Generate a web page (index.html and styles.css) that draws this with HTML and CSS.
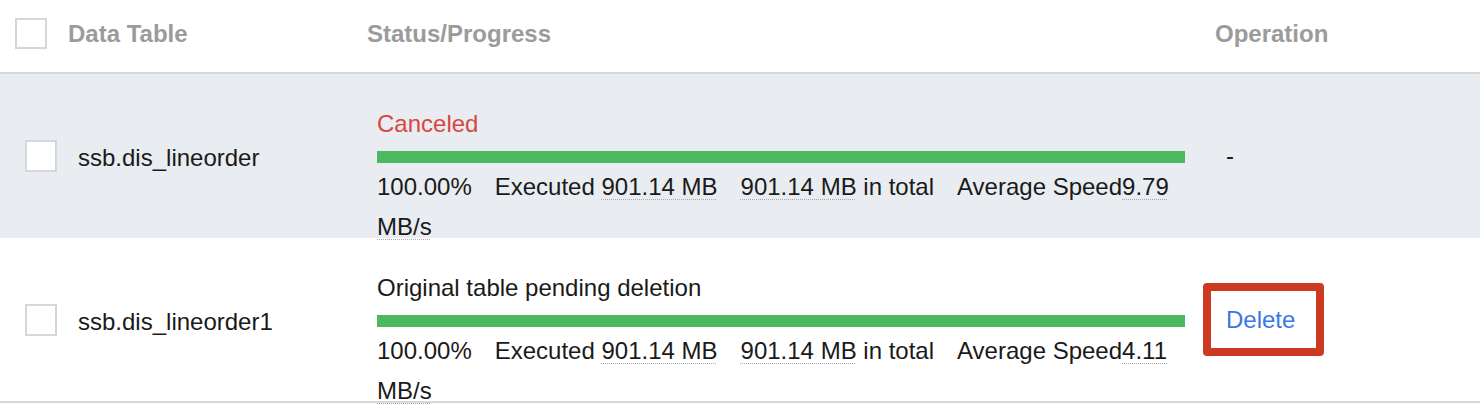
FILE: index.html
```html
<!DOCTYPE html>
<html lang="en">
<head>
<meta charset="utf-8">
<title>Data Table</title>
<link rel="stylesheet" href="styles.css">
</head>
<body>
<div class="table">
  <div class="head">
    <span class="checkbox"></span>
    <span class="h-name">Data Table</span>
    <span class="h-status">Status/Progress</span>
    <span class="h-op">Operation</span>
  </div>
  <div class="row row-alt">
    <span class="checkbox"></span>
    <span class="name">ssb.dis_lineorder</span>
    <div class="status">
      <div class="state state-cancel">Canceled</div>
      <div class="bar"><div class="fill" style="width:100%"></div></div>
      <div class="stats"><span class="seg">100.00%</span><span class="seg">Executed <span class="dot">901.14 MB</span></span><span class="seg"><span class="dot">901.14 MB</span> in total</span><span class="seg">Average Speed<span class="dot">9.79</span></span> <span class="dot">MB/s</span></div>
    </div>
    <div class="op"><span class="dash">-</span></div>
  </div>
  <div class="row row-last">
    <span class="checkbox"></span>
    <span class="name">ssb.dis_lineorder1</span>
    <div class="status">
      <div class="state">Original table pending deletion</div>
      <div class="bar"><div class="fill" style="width:100%"></div></div>
      <div class="stats"><span class="seg">100.00%</span><span class="seg">Executed <span class="dot">901.14 MB</span></span><span class="seg"><span class="dot">901.14 MB</span> in total</span><span class="seg">Average Speed<span class="dot">4.11</span></span> <span class="dot">MB/s</span></div>
    </div>
    <div class="op"><a class="link">Delete<span class="highlight"></span></a></div>
  </div>
</div>
</body>
</html>
```
FILE: styles.css
```css
html, body {
  margin: 0;
  padding: 0;
  background: #ffffff;
}
body {
  font-family: "Liberation Sans", Arial, Helvetica, sans-serif;
  font-size: 24px;
  color: #1a1a1a;
  width: 1480px;
  height: 404px;
  overflow: hidden;
}
.table {
  display: flex;
  flex-direction: column;
}
.head {
  display: grid;
  grid-template-columns: 53px 299px 848px 1fr;
  align-items: center;
  height: 74px;
  box-sizing: border-box;
  padding: 0 0 5px 15px;
  border-bottom: 2px solid #d3d7de;
  font-weight: bold;
  color: #9b9b9b;
}
.checkbox {
  display: block;
  width: 32px;
  height: 32px;
  box-sizing: border-box;
  border: 2px solid #d4d7dd;
  background: #ffffff;
}
.head .checkbox {
  height: 31px;
}
.row {
  display: grid;
  grid-template-columns: 53px 299px 808px 1fr;
  grid-template-rows: minmax(0, 1fr);
  align-items: center;
  height: 164px;
  box-sizing: border-box;
  padding-left: 25px;
}
.row-alt {
  background: #e9ecf1;
}
.row-last {
  border-bottom: 2px solid #d3d7de;
  height: 165px;
}
.name {
  line-height: 28px;
  padding-top: 4px;
}
.status {
  align-self: start;
  padding-top: 30px;
}
.state {
  line-height: 40px;
}
.state-cancel {
  color: #d8473f;
}
.bar {
  margin-top: 7px;
  height: 12px;
  background: #e3e6eb;
}
.fill {
  height: 100%;
  background: #4cb960;
}
.stats {
  margin-top: 4px;
  line-height: 40px;
}
.seg + .seg {
  margin-left: 23px;
}
.dot {
  text-decoration: underline dotted #a6a9ae;
  text-decoration-thickness: 1px;
  text-underline-offset: 4px;
}
.op {
  padding-left: 40px;
  line-height: 28px;
}
.dash {
  padding-left: 1px;
}
.link {
  position: relative;
  display: inline-block;
  color: #3a77e6;
  padding-left: 1px;
}
.highlight {
  position: absolute;
  left: -22px;
  right: -29px;
  top: -23px;
  bottom: -22px;
  border: 8px solid #cc3a22;
  border-radius: 4px;
}
```
